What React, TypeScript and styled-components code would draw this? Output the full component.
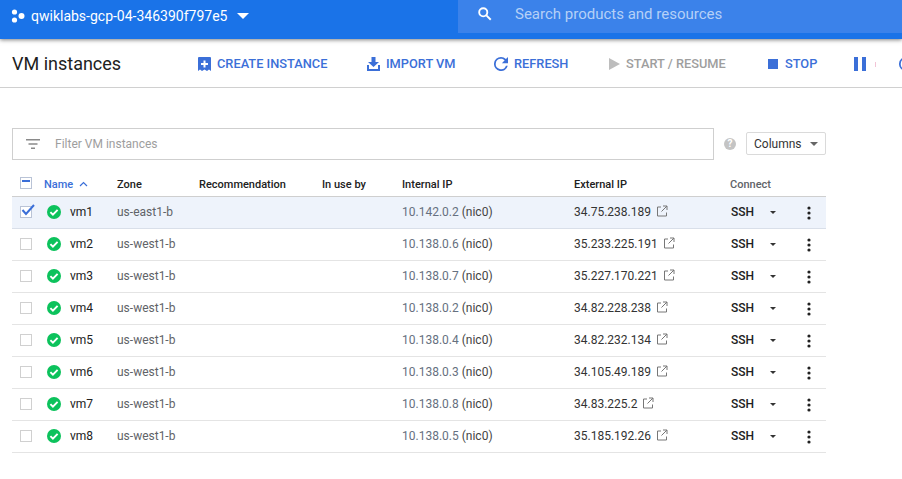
import React from 'react';
import styled, { createGlobalStyle } from 'styled-components';

const GlobalStyle = createGlobalStyle`
  html, body {
    margin: 0;
    padding: 0;
    width: 902px;
    height: 479px;
    overflow: hidden;
    background: #fff;
    font-family: Roboto, 'Liberation Sans', sans-serif;
  }
`;

const Page = styled.div`
  width: 902px;
  height: 479px;
  overflow: hidden;
`;

const TopBar = styled.header`
  height: 39px;
  background: #1a73e8;
  display: flex;
  box-shadow: 0 1px 4px rgba(0, 0, 0, 0.5);
  position: relative;
`;

const ProjectPicker = styled.div`
  width: 458px;
  display: flex;
  align-items: center;
  padding: 0 0 8px 11px;
  box-sizing: border-box;
  color: #fff;
`;

const ProjectName = styled.span`
  font-size: 14px;
  margin-left: 6px;
`;

const Caret = styled.span<{ $size: number; $color: string }>`
  width: 0;
  height: 0;
  border-left: ${(p) => p.$size}px solid transparent;
  border-right: ${(p) => p.$size}px solid transparent;
  border-top: ${(p) => p.$size}px solid ${(p) => p.$color};
`;

const HeaderCaret = styled(Caret)`
  margin-left: 10px;
`;

const SearchBox = styled.div`
  flex: 1;
  height: 33px;
  box-sizing: border-box;
  background: #3b82ea;
  display: flex;
  align-items: center;
  padding: 0 0 6px 19px;
  font-size: 15px;
  color: #b5d0f7;
  gap: 23px;
`;

const ActionBar = styled.div`
  height: 48px;
  border-bottom: 1px solid #d0d0d0;
  display: flex;
  align-items: center;
  white-space: nowrap;
  overflow: hidden;
  padding-left: 12px;
`;

const Title = styled.h1`
  margin: 0;
  width: 186px;
  flex: none;
  font-size: 18px;
  font-weight: 400;
  color: #212121;
`;

const Action = styled.div<{ $disabled?: boolean; $width: number }>`
  flex: none;
  width: ${(p) => p.$width}px;
  display: flex;
  align-items: center;
  gap: 6px;
  padding-top: 1px;
  font-size: 12.8px;
  font-weight: 500;
  color: ${(p) => (p.$disabled ? '#9e9e9e' : '#3b6fd8')};
`;

const ClippedLabel = styled.span`
  flex: none;
  width: 1px;
  height: 5px;
  margin: 2px 23px 0 0;
  background: #f2c4d6;
`;

const Content = styled.main`
  width: 814px;
  margin-left: 12px;
  padding-top: 40px;
`;

const FilterRow = styled.div`
  display: flex;
  align-items: center;
`;

const FilterBox = styled.div`
  flex: none;
  box-sizing: border-box;
  width: 702px;
  height: 32px;
  border: 1px solid #cfcfcf;
  display: flex;
  align-items: center;
  padding-left: 13px;
  gap: 15px;
  font-size: 12px;
  color: #9e9e9e;
`;

const HelpDot = styled.span`
  width: 12px;
  height: 12px;
  margin-left: 10px;
  border-radius: 50%;
  background: #c4c4c4;
  color: #fff;
  font-size: 10px;
  font-weight: 700;
  line-height: 12px;
  text-align: center;
`;

const ColumnsButton = styled.div`
  margin: -1px 0 0 10px;
  width: 80px;
  height: 23px;
  box-sizing: border-box;
  border: 1px solid #dadada;
  border-radius: 2px;
  display: flex;
  align-items: center;
  padding-left: 7px;
  gap: 8px;
  font-size: 12px;
  color: #333;
`;

const Table = styled.div`
  margin-top: 12px;
`;

const Row = styled.div<{ $selected?: boolean; $head?: boolean }>`
  box-sizing: border-box;
  height: ${(p) => (p.$head ? 25 : 32)}px;
  padding-bottom: ${(p) => (p.$head ? 0 : 2)}px;
  display: grid;
  grid-template-columns: 32px 73px 82px 123px 80px 172px 156px 55px 41px;
  align-items: center;
  font-size: 12px;
  color: #212121;
  background: ${(p) => (p.$selected ? '#eef3fb' : 'transparent')};
  border-bottom: 1px solid ${(p) => (p.$head ? '#cfcfcf' : p.$selected ? '#d9dfe9' : '#e4e4e4')};
`;

const HeadCell = styled.div<{ $active?: boolean; $muted?: boolean }>`
  font-size: 11px;
  font-weight: 500;
  display: flex;
  align-items: center;
  gap: 6px;
  color: ${(p) => (p.$active ? '#3b6fd8' : p.$muted ? '#5f6368' : '#212121')};
`;

const CheckBox = styled.span<{ $on?: boolean; $head?: boolean }>`
  position: relative;
  display: block;
  width: 10px;
  height: 10px;
  margin: 0 0 ${(p) => (p.$head ? 3 : 0)}px 8px;
  border: 1px solid ${(p) => (p.$on ? '#b9c3d6' : '#d0d0d0')};
  background: #fff;
`;

const Cell = styled.div`
  display: flex;
  align-items: center;
`;

const NameCell = styled(Cell)`
  gap: 9px;
  padding-left: 3px;
`;

const ZoneCell = styled(Cell)`
  color: #5f6368;
`;

const IpCell = styled(Cell)`
  color: #667080;
  gap: 3px;
`;

const Nic = styled.span`
  color: #444;
`;

const ExternalCell = styled(Cell)`
  gap: 5px;
  color: #333;
`;

const RaisedLink = styled.span`
  display: flex;
  margin-bottom: 2px;
`;

const SshCell = styled(Cell)`
  font-weight: 500;
  gap: 16px;
  padding: 1px 0 0 1px;
`;

const MoreCell = styled(Cell)`
  padding: 2px 0 0 22px;
`;

const AddIcon = () => (
  <svg width="13" height="14" viewBox="0 0 13 14">
    <path fill="#3b6fd8" d="M1 0h11a1 1 0 0 1 1 1v13l-2-1.6L9 14l-2.5-1.6L4 14l-2-1.6L0 14V1a1 1 0 0 1 1-1z" />
    <path fill="#fff" d="M5.5 3.5h2v2.5H10v2H7.5v2.5h-2V8H3V6h2.5z" />
  </svg>
);

const ImportIcon = () => (
  <svg width="13" height="14" viewBox="0 0 13 14">
    <path fill="#3b6fd8" d="M4.5 0h4v5H12L6.5 10 1 5h3.5z" />
    <path fill="#3b6fd8" d="M0 8h2v4h9V8h2v6H0z" />
  </svg>
);

const RefreshIcon = () => (
  <svg width="14" height="14" viewBox="4 4 16 16">
    <path
      fill="#3b6fd8"
      d="M17.65 6.35A7.96 7.96 0 0 0 12 4a8 8 0 1 0 7.73 10h-2.08A6 6 0 1 1 12 6c1.66 0 3.14.69 4.22 1.78L13 11h7V4l-2.35 2.35z"
    />
  </svg>
);

const PlayIcon = () => (
  <svg width="11" height="12" viewBox="0 0 11 12">
    <path fill="#bdbdbd" d="M0 0l11 6-11 6z" />
  </svg>
);

const StopIcon = () => (
  <svg width="11" height="10" viewBox="0 0 11 10">
    <rect width="10" height="10" fill="#3b6fd8" />
  </svg>
);

const PauseIcon = () => (
  <svg width="12" height="14" viewBox="0 0 12 14">
    <path fill="#3b6fd8" d="M0 0h4v14H0zM8 0h4v14H8z" />
  </svg>
);

const ProjectIcon = () => (
  <svg width="14" height="14" viewBox="0 0 14 14">
    <circle cx="3.5" cy="3" r="2.6" fill="#fff" />
    <circle cx="3.5" cy="11" r="2.6" fill="#fff" />
    <circle cx="10.5" cy="7" r="3" fill="#fff" />
  </svg>
);

const SearchIcon = () => (
  <svg width="15" height="15" viewBox="0 0 24 24" fill="none" stroke="#fff" strokeWidth="3">
    <circle cx="10" cy="10" r="6.5" />
    <path d="M15 15l7 7" />
  </svg>
);

const FilterIcon = () => (
  <svg width="14" height="10" viewBox="0 0 14 10">
    <path fill="#8a8a8a" d="M0 0h14v1.4H0zM2.5 4.3h9v1.4h-9zM5 8.6h4V10H5z" />
  </svg>
);

const StatusIcon = () => (
  <svg width="14" height="14" viewBox="0 0 14 14">
    <circle cx="7" cy="7" r="7" fill="#0cc25c" />
    <path d="M3.4 7.2l2.5 2.5 4.7-4.9" fill="none" stroke="#fff" strokeWidth="1.9" />
  </svg>
);

const CheckMark = () => (
  <svg width="14" height="12" viewBox="0 0 14 12" style={{ position: 'absolute', left: 0, top: -3 }}>
    <path d="M1.5 6l3.5 4 8-9" fill="none" stroke="#3b6fd8" strokeWidth="2" />
  </svg>
);

const DashMark = () => (
  <svg width="10" height="10" viewBox="0 0 10 10" style={{ display: 'block' }}>
    <rect x="1" y="2" width="8" height="2" fill="#3b6fd8" />
  </svg>
);

const SortIcon = () => (
  <svg width="9" height="6" viewBox="0 0 9 6">
    <path d="M1 5l3.5-3.5L8 5" fill="none" stroke="#3b6fd8" strokeWidth="1.2" />
  </svg>
);

const ExternalIcon = () => (
  <svg width="12" height="12" viewBox="0 0 12 12" fill="none" stroke="#777" strokeWidth="1">
    <path d="M5 2H1.5v9h9V7.5M7 1h4v4M11 1L5.5 6.5" />
  </svg>
);

const DotsIcon = () => (
  <svg width="4" height="14" viewBox="0 0 4 14">
    <circle cx="2" cy="2" r="1.6" fill="#212121" />
    <circle cx="2" cy="7" r="1.6" fill="#212121" />
    <circle cx="2" cy="12" r="1.6" fill="#212121" />
  </svg>
);

const vms = [
  { name: 'vm1', zone: 'us-east1-b', ip: '10.142.0.2', ext: '34.75.238.189' },
  { name: 'vm2', zone: 'us-west1-b', ip: '10.138.0.6', ext: '35.233.225.191' },
  { name: 'vm3', zone: 'us-west1-b', ip: '10.138.0.7', ext: '35.227.170.221' },
  { name: 'vm4', zone: 'us-west1-b', ip: '10.138.0.2', ext: '34.82.228.238' },
  { name: 'vm5', zone: 'us-west1-b', ip: '10.138.0.4', ext: '34.82.232.134' },
  { name: 'vm6', zone: 'us-west1-b', ip: '10.138.0.3', ext: '34.105.49.189' },
  { name: 'vm7', zone: 'us-west1-b', ip: '10.138.0.8', ext: '34.83.225.2' },
  { name: 'vm8', zone: 'us-west1-b', ip: '10.138.0.5', ext: '35.185.192.26' },
];

const App = (): JSX.Element => (
  <Page>
    <GlobalStyle />
    <TopBar>
      <ProjectPicker>
        <ProjectIcon />
        <ProjectName>qwiklabs-gcp-04-346390f797e5</ProjectName>
        <HeaderCaret $size={6} $color="#fff" />
      </ProjectPicker>
      <SearchBox>
        <SearchIcon />
        <span>Search products and resources</span>
      </SearchBox>
    </TopBar>
    <ActionBar>
      <Title>VM instances</Title>
      <Action $width={169}><AddIcon />CREATE INSTANCE</Action>
      <Action $width={127}><ImportIcon />IMPORT VM</Action>
      <Action $width={115}><RefreshIcon />REFRESH</Action>
      <Action $width={159} $disabled><PlayIcon />START / RESUME</Action>
      <Action $width={86}><StopIcon />STOP</Action>
      <Action $width={21}><PauseIcon /></Action>
      <ClippedLabel />
      <Action $width={14}><RefreshIcon /></Action>
    </ActionBar>
    <Content>
      <FilterRow>
        <FilterBox><FilterIcon />Filter VM instances</FilterBox>
        <HelpDot>?</HelpDot>
        <ColumnsButton>Columns<Caret $size={4} $color="#666" /></ColumnsButton>
      </FilterRow>
      <Table>
        <Row $head>
          <CheckBox $on $head><DashMark /></CheckBox>
          <HeadCell $active>Name <SortIcon /></HeadCell>
          <HeadCell>Zone</HeadCell>
          <HeadCell>Recommendation</HeadCell>
          <HeadCell>In use by</HeadCell>
          <HeadCell>Internal IP</HeadCell>
          <HeadCell>External IP</HeadCell>
          <HeadCell $muted>Connect</HeadCell>
          <span />
        </Row>
        {vms.map((vm, i) => (
          <Row key={vm.name} $selected={i === 0}>
            <CheckBox $on={i === 0}>{i === 0 && <CheckMark />}</CheckBox>
            <NameCell><StatusIcon />{vm.name}</NameCell>
            <ZoneCell>{vm.zone}</ZoneCell>
            <span />
            <span />
            <IpCell>{vm.ip} <Nic>(nic0)</Nic></IpCell>
            <ExternalCell>{vm.ext}<RaisedLink><ExternalIcon /></RaisedLink></ExternalCell>
            <SshCell>SSH<Caret $size={3} $color="#333" /></SshCell>
            <MoreCell><DotsIcon /></MoreCell>
          </Row>
        ))}
      </Table>
    </Content>
  </Page>
);

export default App;
